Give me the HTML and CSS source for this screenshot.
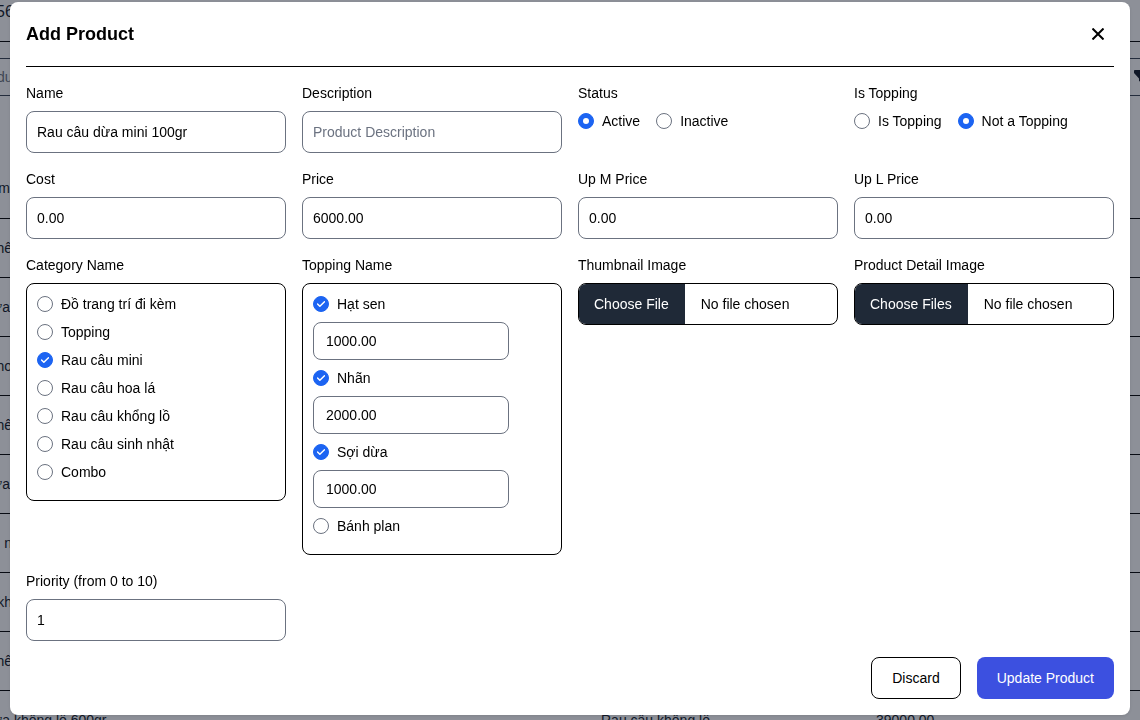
FILE: index.html
```html
<!DOCTYPE html>
<html lang="en">
<head>
<meta charset="utf-8">
<meta name="viewport" content="width=device-width, initial-scale=1">
<title>Add Product</title>
<link rel="stylesheet" href="styles.css">
</head>
<body>
<div class="page" aria-hidden="true">
  <div class="page-head">56</div>
  <div class="page-search">
    <span>du</span>
    <svg class="funnel" viewBox="0 0 16 16"><path d="M0 1.500Q0 1 1 1H15Q16 1 16 1.500V4L10 9.500V15L5 12V9.500L0 4Z"/></svg>
  </div>
  <table class="page-table">
    <tbody>
      <tr><td><span class="clip">m</span></td><td></td><td></td></tr>
      <tr><td><span class="clip wide">hê</span></td><td></td><td></td></tr>
      <tr><td><span class="clip">ừa</span></td><td></td><td></td></tr>
      <tr><td><span class="clip wide">ho</span></td><td></td><td></td></tr>
      <tr><td><span class="clip wide">hê</span></td><td></td><td></td></tr>
      <tr><td><span class="clip">ừa</span></td><td></td><td></td></tr>
      <tr><td><span class="clip wide">n</span></td><td></td><td></td></tr>
      <tr><td><span class="clip wide">kh</span></td><td></td><td></td></tr>
      <tr><td><span class="clip wide">hê</span></td><td></td><td></td></tr>
      <tr><td><span class="clip">ừa</span> không lồ 600gr</td><td>Rau câu không lồ</td><td>39000.00</td></tr>
    </tbody>
  </table>
</div>

<div class="overlay">
  <form class="modal" role="dialog" aria-labelledby="title">
    <header class="modal-head">
      <h1 id="title">Add Product</h1>
      <button type="button" class="close" aria-label="Close">
        <svg viewBox="0 0 12 12"><path d="M.5.5l11 11M11.500.5l-11 11"/></svg>
      </button>
    </header>

    <div class="grid">
      <div class="field">
        <label for="name">Name</label>
        <input class="text" id="name" type="text" value="Rau câu dừa mini 100gr">
      </div>
      <div class="field">
        <label for="description">Description</label>
        <input class="text" id="description" type="text" placeholder="Product Description">
      </div>
      <fieldset class="field">
        <legend>Status</legend>
        <div class="inline">
          <label class="choice"><input type="radio" name="status" checked>Active</label>
          <label class="choice"><input type="radio" name="status">Inactive</label>
        </div>
      </fieldset>
      <fieldset class="field">
        <legend>Is Topping</legend>
        <div class="inline">
          <label class="choice"><input type="radio" name="topping">Is Topping</label>
          <label class="choice"><input type="radio" name="topping" checked>Not a Topping</label>
        </div>
      </fieldset>

      <div class="field">
        <label for="cost">Cost</label>
        <input class="text" id="cost" type="text" value="0.00">
      </div>
      <div class="field">
        <label for="price">Price</label>
        <input class="text" id="price" type="text" value="6000.00">
      </div>
      <div class="field">
        <label for="up-m">Up M Price</label>
        <input class="text" id="up-m" type="text" value="0.00">
      </div>
      <div class="field">
        <label for="up-l">Up L Price</label>
        <input class="text" id="up-l" type="text" value="0.00">
      </div>

      <fieldset class="field">
        <legend>Category Name</legend>
        <div class="box">
          <label class="choice"><input type="checkbox">Đồ trang trí đi kèm</label>
          <label class="choice"><input type="checkbox">Topping</label>
          <label class="choice"><input type="checkbox" checked>Rau câu mini</label>
          <label class="choice"><input type="checkbox">Rau câu hoa lá</label>
          <label class="choice"><input type="checkbox">Rau câu khổng lồ</label>
          <label class="choice"><input type="checkbox">Rau câu sinh nhật</label>
          <label class="choice"><input type="checkbox">Combo</label>
        </div>
      </fieldset>
      <fieldset class="field">
        <legend>Topping Name</legend>
        <div class="box">
          <label class="choice"><input type="checkbox" checked>Hạt sen</label>
          <input class="text small" type="text" value="1000.00" aria-label="Hạt sen price">
          <label class="choice"><input type="checkbox" checked>Nhãn</label>
          <input class="text small" type="text" value="2000.00" aria-label="Nhãn price">
          <label class="choice"><input type="checkbox" checked>Sợi dừa</label>
          <input class="text small" type="text" value="1000.00" aria-label="Sợi dừa price">
          <label class="choice"><input type="checkbox">Bánh plan</label>
        </div>
      </fieldset>
      <div class="field">
        <label for="thumbnail">Thumbnail Image</label>
        <input class="file" id="thumbnail" type="file">
      </div>
      <div class="field">
        <label for="detail">Product Detail Image</label>
        <input class="file" id="detail" type="file" multiple>
      </div>

      <div class="field">
        <label for="priority">Priority (from 0 to 10)</label>
        <input class="text" id="priority" type="text" value="1">
      </div>
    </div>

    <footer class="actions">
      <button type="button" class="btn">Discard</button>
      <button type="submit" class="btn primary">Update Product</button>
    </footer>
  </form>
</div>
</body>
</html>
```
FILE: styles.css
```css
* {
  box-sizing: border-box;
}

body {
  margin: 0;
  height: 100vh;
  overflow: hidden;
  font: 14px/20px "Liberation Sans", Arial, sans-serif;
  color: #000;
  background: #fff;
}

input,
button {
  font: inherit;
  color: inherit;
}

/* Product list under the dialog */
.page {
  height: 100vh;
  overflow: hidden;
  color: #111827;
}

.page-head {
  height: 42px;
  padding-top: 2px;
  border-bottom: 1px solid #000;
  font-size: 16px;
  text-indent: -4px;
}

.page-search {
  display: flex;
  align-items: center;
  justify-content: space-between;
  height: 38px;
  margin-top: 16px;
  margin-right: -10px;
  border: solid #374151;
  border-width: 1px 0;
  color: #6b7280;
  text-indent: -3px;
}

.funnel {
  width: 16px;
  height: 16px;
  fill: #111827;
}

.page-table {
  width: 100%;
  margin-top: 63px;
  border-collapse: collapse;
  table-layout: fixed;
}

.page-table td {
  height: 59px;
  padding: 0;
  border-bottom: 1px solid #000;
  white-space: nowrap;
}

.page-table td:first-child {
  width: 601px;
}

.page-table td:nth-child(2) {
  width: 275px;
}

.clip {
  display: inline-flex;
  justify-content: flex-end;
  width: 10px;
}

.wide {
  width: 12px;
}

/* Dialog */
.overlay {
  position: fixed;
  inset: 0;
  padding: 2px 10px 0;
  background: rgba(17, 24, 39, 0.48);
}

.modal {
  padding: 16px;
  border-radius: 8px;
  background: #fff;
  box-shadow: 0 1px 3px rgba(0, 0, 0, 0.1);
}

.modal-head {
  display: flex;
  align-items: center;
  justify-content: space-between;
  height: 49px;
  margin-bottom: 16px;
  padding-bottom: 16px;
  border-bottom: 1px solid #000;
}

.modal-head h1 {
  margin: 0;
  font-size: 18px;
  line-height: 28px;
}

.close {
  display: flex;
  padding: 10px;
  border: 0;
  background: none;
}

.close svg {
  width: 12px;
  height: 12px;
  fill: none;
  stroke: #000;
  stroke-width: 2;
}

.grid {
  display: grid;
  grid-template-columns: repeat(4, minmax(0, 1fr));
  gap: 16px;
  align-items: start;
}

.field {
  display: flex;
  flex-direction: column;
  gap: 8px;
  min-width: 0;
  margin: 0;
  padding: 0;
  border: 0;
}

fieldset.field {
  display: block;
}

legend {
  padding: 0;
  margin-bottom: 8px;
}

.text {
  width: 100%;
  height: 42px;
  padding: 0 10px;
  border: 1px solid #6b7280;
  border-radius: 8px;
  background: #fff;
}

.text::placeholder {
  color: #6b7280;
  opacity: 1;
}

.small {
  width: 196px;
  max-width: 100%;
  height: 38px;
  padding: 0 12px;
}

.inline {
  display: flex;
  gap: 16px;
}

.choice {
  display: flex;
  align-items: center;
  gap: 8px;
}

.choice input {
  appearance: none;
  flex: none;
  width: 16px;
  height: 16px;
  margin: 0;
  border: 1px solid #6b7280;
  border-radius: 50%;
  background: #fff center / 100% 100% no-repeat;
}

.choice input:checked {
  border-color: #1c64f2;
  background-color: #1c64f2;
}

.choice input[type="radio"]:checked {
  background-image: url("data:image/svg+xml,%3Csvg xmlns='http://www.w3.org/2000/svg' viewBox='0 0 14 14'%3E%3Ccircle cx='7' cy='7' r='3' fill='white'/%3E%3C/svg%3E");
}

.choice input[type="checkbox"]:checked {
  background-image: url("data:image/svg+xml,%3Csvg xmlns='http://www.w3.org/2000/svg' fill='none' viewBox='0 0 16 12'%3E%3Cpath stroke='white' stroke-linecap='round' stroke-linejoin='round' stroke-width='3' d='M1 5.917 5.724 10.500 15 1.500'/%3E%3C/svg%3E");
  background-size: 8px 8px;
}

.box {
  display: flex;
  flex-direction: column;
  gap: 8px;
  padding: 10px 10px 18px;
  border: 1px solid #000;
  border-radius: 8px;
}

.file {
  width: 100%;
  height: 42px;
  border: 1px solid #000;
  border-radius: 8px;
  overflow: hidden;
  line-height: 40px;
}

.file::file-selector-button {
  height: 40px;
  margin: 0 16px 0 0;
  padding: 0 16px 0 15px;
  border: 0;
  background: #1f2937;
  color: #fff;
  font: inherit;
}

.actions {
  display: flex;
  justify-content: flex-end;
  gap: 16px;
  margin-top: 16px;
}

.btn {
  padding: 10px 20px;
  border: 1px solid #000;
  border-radius: 8px;
  background: #fff;
}

.primary {
  padding: 11px 20px;
  border: 0;
  background: #3c50e0;
  color: #fff;
}
```
